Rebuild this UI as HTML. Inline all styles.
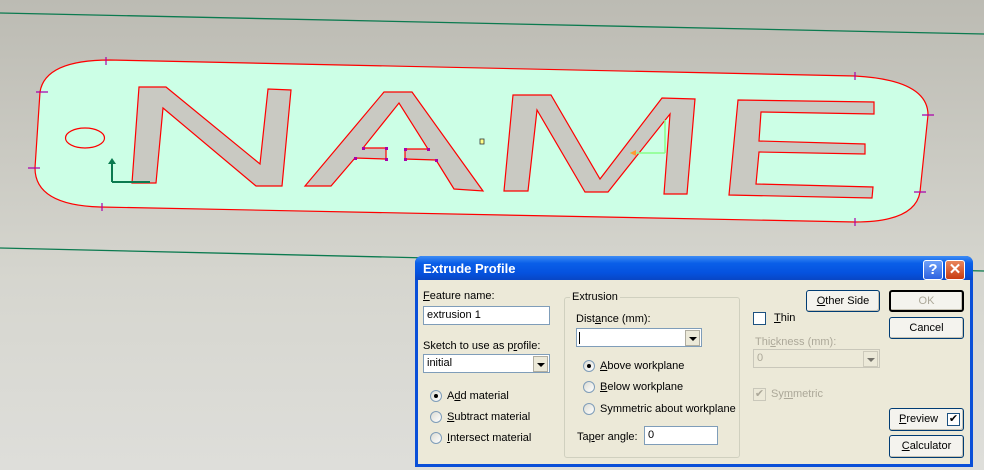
<!DOCTYPE html>
<html><head><meta charset="utf-8"><style>
*{margin:0;padding:0;box-sizing:border-box}
body{width:984px;height:470px;overflow:hidden;position:relative;font-family:"Liberation Sans",sans-serif;font-size:11px;color:#000;background:linear-gradient(#bcbbb3,#d6d6cf 60%,#dededa)}
.a{position:absolute}
.dlg{left:415px;top:256px;width:558px;height:211px;background:#0a4fd8;border-radius:7px 7px 0 0}
.tb{left:0;top:0;width:558px;height:24px;border-radius:7px 7px 0 0;background:linear-gradient(#3d8cf5,#0a5fe8 30%,#0552df 70%,#0846c4)}
.ttl{left:8px;top:5px;color:#fff;font-weight:bold;font-size:13px}
.body{left:3px;top:24px;width:552px;height:184px;background:#ece9d8}
.inp{background:#fff;border:1px solid #7f9db9}
.btn{background:#f4f3ee;border:1px solid #003c74;border-radius:3px;text-align:center;line-height:20px;box-shadow:inset -1px -1px 0 #c6c2b4}
.rad{width:12px;height:12px;border-radius:50%;border:1px solid #7f9db9;background:linear-gradient(135deg,#dcdcd3,#fff)}
.dot{position:absolute;left:3px;top:3px;width:4px;height:4px;border-radius:50%;background:#000}
.dd{position:absolute;right:1px;top:1px;width:15px;height:16px;background:#ece9d8;border:1px solid #b0ada0}
.dd:after{content:"";position:absolute;left:3px;top:6px;border:4px solid transparent;border-top:4px solid #000}
.dis{color:#aca899}
u{text-decoration:underline}
</style></head><body>
<svg class="a" style="left:0;top:0" width="984" height="470">
<polyline points="0,13 984,34" stroke="#0b7a4f" stroke-width="1.3" fill="none"/>
<polyline points="0,248 984,271" stroke="#0b7a4f" stroke-width="1.3" fill="none"/>
<path d="M110 60 L855 76 Q928 80 928 115 L920 192 Q915 222 855 222 L100 207 Q35 205 35 168 L40 92 Q45 60 110 60 Z" fill="#ccffe6" stroke="#f00" stroke-width="1.2"/>
<ellipse cx="85" cy="138" rx="19.5" ry="10" fill="#ccffe6" stroke="#f00" stroke-width="1.2"/>
<g fill="#c9c9c2" stroke="#f00" stroke-width="1.2">
<polygon points="139,87 166,87 260,164 268,89 291,90 282,186 256,186 163,108 156,183 132,183"/>
<polygon points="384,92 412,92 483,191 454,189 436,160 405,159 405,149 428,149 399,103 363,148 386,148 386,159 355,158 331,186 305,186"/>
<polygon points="513,95 551,95 600,179 662,98 695,99 687,194 664,194 670,114 608,192 585,192 537,110 528,191 504,191"/>
<polygon points="738,100 874,102 874,114 761,112 759,141 865,144 865,154 759,152 756,184 873,187 872,198 729,195"/>
</g>
<rect x="480" y="139" width="4" height="5" fill="#ff8" stroke="#333" stroke-width="0.8"/>
<path d="M112 182 V160 M112 182 H150" stroke="#0b7a4f" stroke-width="2"/>
<path d="M108 164 L112 158 L116 164Z" fill="#0b7a4f"/>
<path d="M665 153 V120 M665 153 H630" stroke="#8f8" stroke-width="1.5"/>
<path d="M630 153 L636 150 L636 156Z" fill="#f93"/>
<g fill="#a0a"><rect x="362" y="147" width="3" height="3"/><rect x="385" y="147" width="3" height="3"/><rect x="385" y="158" width="3" height="3"/><rect x="354" y="157" width="3" height="3"/><rect x="404" y="148" width="3" height="3"/><rect x="427" y="148" width="3" height="3"/><rect x="404" y="158" width="3" height="3"/><rect x="435" y="159" width="3" height="3"/></g>
<g stroke="#a0a" stroke-width="1.2">
<path d="M106 57v8M36 92h12M28 168h12M102 203v8M855 72v8M922 115h12M914 192h12M855 218v8"/>
</g>
</svg>
<div class="a dlg">
<div class="a tb"><div class="a ttl">Extrude Profile</div>
<div class="a" style="left:508px;top:4px;width:20px;height:20px;border:1px solid #fff;border-radius:3px;background:linear-gradient(#6ea0f8,#2e62e0);color:#fff;font-weight:bold;font-size:15px;text-align:center;line-height:18px">?</div>
<div class="a" style="left:530px;top:4px;width:20px;height:20px;border:1px solid #fff;border-radius:3px;background:linear-gradient(#e9875c,#c83c12);color:#fff;font-weight:bold;font-size:15px;text-align:center;line-height:18px">✕</div>
</div>
<div class="a body"></div>
</div>
<div class="a" style="left:423px;top:290px"><u>F</u>eature name:</div>
<div class="a inp" style="left:423px;top:306px;width:127px;height:19px;padding:2px 3px">extrusion 1</div>
<div class="a" style="left:423px;top:340px">Sketch to use as p<u>r</u>ofile:</div>
<div class="a inp" style="left:423px;top:354px;width:127px;height:19px;padding:2px 3px">initial<div class="dd"></div></div>
<div class="a rad" style="left:430px;top:390px"><div class="dot"></div></div><div class="a" style="left:447px;top:390px">A<u>d</u>d material</div>
<div class="a rad" style="left:430px;top:411px"></div><div class="a" style="left:447px;top:411px"><u>S</u>ubtract material</div>
<div class="a rad" style="left:430px;top:432px"></div><div class="a" style="left:447px;top:432px"><u>I</u>ntersect material</div>
<div class="a" style="left:564px;top:297px;width:176px;height:161px;border:1px solid #d0d0bf;border-radius:3px"></div>
<div class="a" style="left:570px;top:291px;background:#ece9d8;padding:0 2px">Extrusion</div>
<div class="a" style="left:576px;top:313px">Dist<u>a</u>nce (mm):</div>
<div class="a inp" style="left:576px;top:328px;width:126px;height:19px"><div class="a" style="left:2px;top:3px;width:1px;height:12px;background:#000"></div><div class="dd"></div></div>
<div class="a rad" style="left:583px;top:360px"><div class="dot"></div></div><div class="a" style="left:600px;top:360px"><u>A</u>bove workplane</div>
<div class="a rad" style="left:583px;top:381px"></div><div class="a" style="left:600px;top:381px"><u>B</u>elow workplane</div>
<div class="a rad" style="left:583px;top:403px"></div><div class="a" style="left:600px;top:403px">Symmetric about workplane</div>
<div class="a" style="left:577px;top:431px">Ta<u>p</u>er angle:</div>
<div class="a inp" style="left:644px;top:426px;width:74px;height:19px;padding:2px 3px">0</div>
<div class="a btn" style="left:806px;top:290px;width:74px;height:22px"><u>O</u>ther Side</div>
<div class="a" style="left:753px;top:312px;width:13px;height:13px;border:1px solid #1c5180;background:#fff"></div><div class="a" style="left:774px;top:312px"><u>T</u>hin</div>
<div class="a dis" style="left:755px;top:336px">Thi<u>c</u>kness (mm):</div>
<div class="a" style="left:753px;top:349px;width:127px;height:19px;border:1px solid #c9c7ba;background:#ece9d8;color:#aca899;padding:2px 3px">0<div class="dd" style="opacity:.5"></div></div>
<div class="a" style="left:753px;top:388px;width:13px;height:13px;border:1px solid #c9c7ba;color:#aca899;font-size:11px;line-height:11px;text-align:center">✔</div><div class="a dis" style="left:771px;top:388px">Sy<u>m</u>metric</div>
<div class="a btn" style="left:889px;top:290px;width:75px;height:22px;color:#aca899;border-color:#000;border-width:2px;line-height:18px">OK</div>
<div class="a btn" style="left:889px;top:317px;width:75px;height:22px">Cancel</div>
<div class="a btn" style="left:889px;top:408px;width:75px;height:23px;text-align:left;padding-left:9px"><u>P</u>review<div class="a" style="left:57px;top:4px;width:13px;height:13px;border:1px solid #1c5180;background:#fff;font-size:11px;line-height:11px;text-align:center">✔</div></div>
<div class="a btn" style="left:889px;top:435px;width:75px;height:23px"><u>C</u>alculator</div>
</body></html>
